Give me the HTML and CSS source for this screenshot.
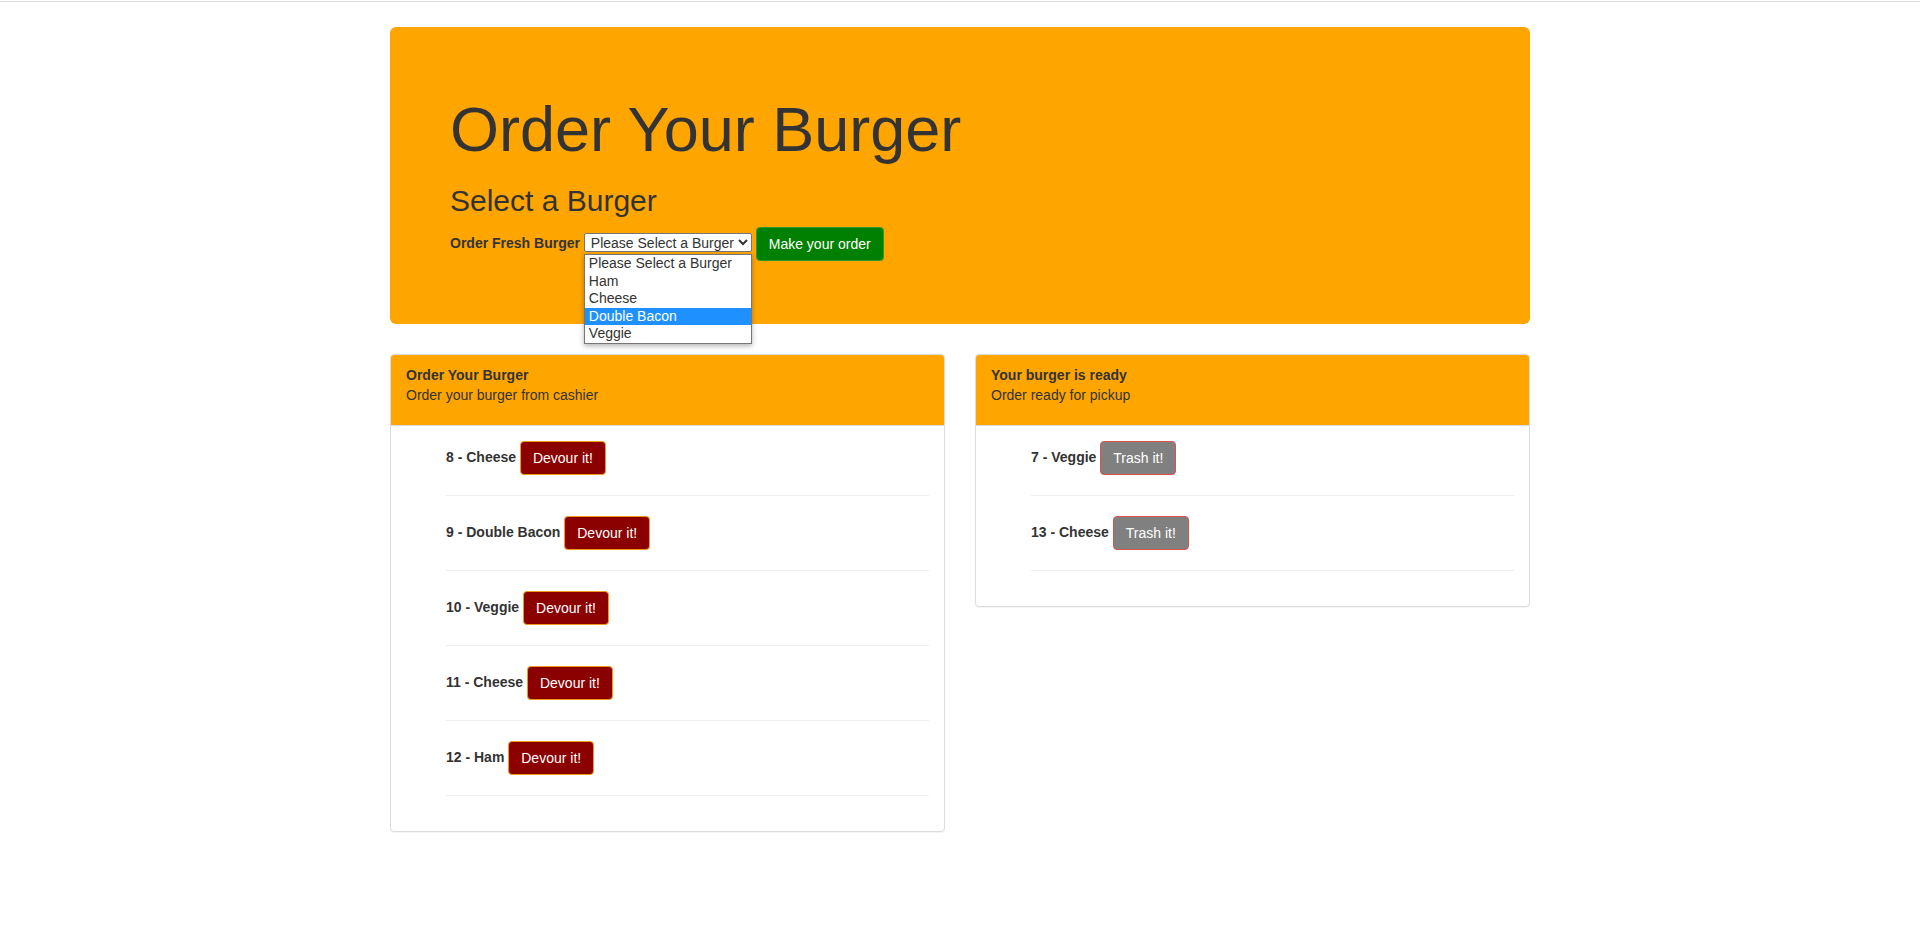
FILE: index.html
```html
<!DOCTYPE html>
<html lang="en">
<head>
<meta charset="utf-8">
<title>Burger</title>
<link rel="stylesheet" href="styles.css">
</head>
<body>
<div class="topline"></div>
<div class="container">
  <div class="jumbotron">
    <h1>Order Your Burger</h1>
    <h2>Select a Burger</h2>
    <form class="order-form">
      <label class="form-label">Order Fresh Burger</label>
      <span class="select-wrap">
        <select class="burger-select">
          <option>Please Select a Burger</option>
          <option>Ham</option>
          <option>Cheese</option>
          <option>Double Bacon</option>
          <option>Veggie</option>
        </select>
        <ul class="select-popup">
          <li>Please Select a Burger</li>
          <li>Ham</li>
          <li>Cheese</li>
          <li class="active">Double Bacon</li>
          <li>Veggie</li>
        </ul>
      </span>
      <button type="button" class="btn btn-order">Make your order</button>
    </form>
  </div>

  <div class="row">
    <div class="panel">
      <div class="panel-heading">
        <div class="panel-title">Order Your Burger</div>
        <p>Order your burger from cashier</p>
      </div>
      <div class="panel-body">
        <ul class="burger-list">
          <li><strong>8 - Cheese</strong> <button type="button" class="btn btn-devour">Devour it!</button><hr></li>
          <li><strong>9 - Double Bacon</strong> <button type="button" class="btn btn-devour">Devour it!</button><hr></li>
          <li><strong>10 - Veggie</strong> <button type="button" class="btn btn-devour">Devour it!</button><hr></li>
          <li><strong>11 - Cheese</strong> <button type="button" class="btn btn-devour">Devour it!</button><hr></li>
          <li><strong>12 - Ham</strong> <button type="button" class="btn btn-devour">Devour it!</button><hr></li>
        </ul>
      </div>
    </div>

    <div class="panel">
      <div class="panel-heading">
        <div class="panel-title">Your burger is ready</div>
        <p>Order ready for pickup</p>
      </div>
      <div class="panel-body">
        <ul class="burger-list">
          <li><strong>7 - Veggie</strong> <button type="button" class="btn btn-trash">Trash it!</button><hr></li>
          <li><strong>13 - Cheese</strong> <button type="button" class="btn btn-trash">Trash it!</button><hr></li>
        </ul>
      </div>
    </div>
  </div>
</div>
</body>
</html>
```
FILE: styles.css
```css
html, body {
  margin: 0;
  padding: 0;
}
body {
  font-family: "Liberation Sans", Arial, Helvetica, sans-serif;
  font-size: 14px;
  line-height: 20px;
  color: #333;
  background: #fff;
}
.topline {
  margin-top: 1px;
  height: 1px;
  background: #dcdcdc;
}
.container {
  width: 1170px;
  margin: 0 auto;
  padding: 0 15px;
  box-sizing: border-box;
}
.jumbotron {
  margin-top: 25px;
  margin-bottom: 30px;
  padding: 48px 60px;
  background: #ffa500;
  border-radius: 6px;
}
.jumbotron h1 {
  margin: 20px 0 10px;
  font-size: 63px;
  line-height: 1.1;
  font-weight: 500;
  color: #333;
}
.jumbotron h2 {
  margin: 20px 0 10px;
  font-size: 30px;
  line-height: 1.1;
  font-weight: 500;
  color: #333;
}
.order-form {
  margin: 0 0 15px;
}
.form-label {
  display: inline-block;
  font-weight: bold;
  margin-bottom: 5px;
}
.select-wrap {
  position: relative;
  display: inline-block;
}
.burger-select {
  width: 168px;
  height: 19px;
  margin: 0;
  padding: 0 0 0 2px;
  font-family: "Liberation Sans", Arial, Helvetica, sans-serif;
  font-size: 14px;
  color: #333;
  background: #fff;
  border: 1px solid #767676;
  border-radius: 2px;
  vertical-align: baseline;
}
.select-popup {
  position: absolute;
  top: 100%;
  left: 0;
  margin: 1px 0 0;
  padding: 0;
  width: 168px;
  box-sizing: border-box;
  list-style: none;
  background: #fff;
  border: 1px solid #767676;
  box-shadow: 0 2px 5px rgba(0, 0, 0, 0.3);
  z-index: 10;
}
.select-popup li {
  height: 17.6px;
  line-height: 17.6px;
  padding: 0 4px;
  color: #333;
  white-space: nowrap;
}
.select-popup li.active {
  background: #1e90ff;
  color: #fff;
}
.btn {
  display: inline-block;
  margin: 0;
  padding: 6px 12px;
  font-family: "Liberation Sans", Arial, Helvetica, sans-serif;
  font-size: 14px;
  line-height: 20px;
  border: 1px solid transparent;
  border-radius: 4px;
  vertical-align: middle;
  color: #fff;
  cursor: pointer;
}
.btn-order {
  background: #008000;
  border-color: #2e9a2e;
}
.btn-devour {
  background: #8b0000;
  border-color: #ef9a1c;
}
.btn-trash {
  background: #808080;
  border-color: #d9534f;
}
.row {
  display: grid;
  grid-template-columns: 1fr 1fr;
  column-gap: 30px;
  align-items: start;
}
.panel {
  margin-bottom: 20px;
  background: #fff;
  border: 1px solid #ddd;
  border-radius: 4px;
  box-shadow: 0 1px 1px rgba(0, 0, 0, 0.05);
}
.panel-heading {
  padding: 10px 15px;
  background: #ffa500;
  border-bottom: 1px solid #ddd;
  border-top-left-radius: 3px;
  border-top-right-radius: 3px;
  color: #333;
}
.panel-title {
  font-weight: bold;
}
.panel-heading p {
  margin: 0 0 10px;
}
.panel-body {
  padding: 15px;
}
.burger-list {
  margin: 0 0 10px;
  padding-left: 40px;
  list-style: none;
}
.burger-list hr {
  margin: 20px 0;
  border: 0;
  border-top: 1px solid #eee;
  height: 0;
}
```
